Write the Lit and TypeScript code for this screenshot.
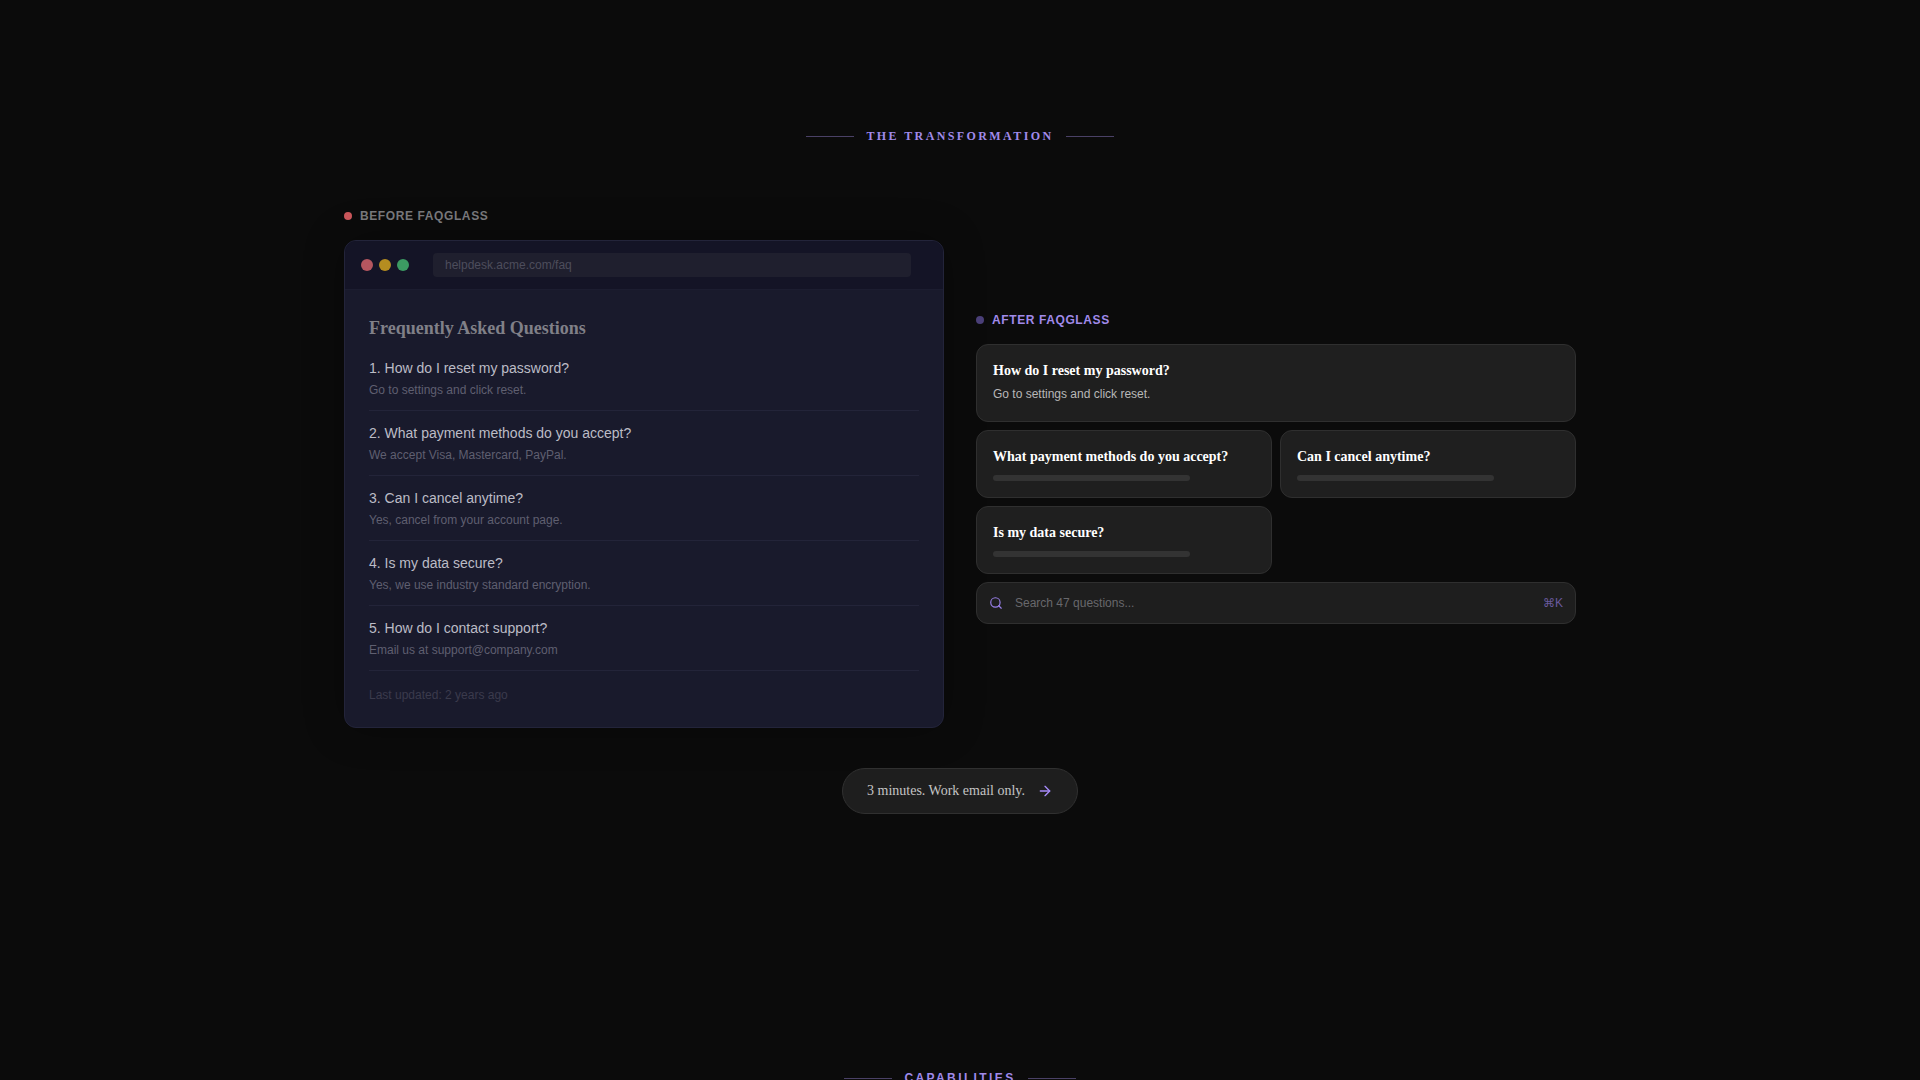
import { LitElement, html, css } from "lit";
import { customElement } from "lit/decorators.js";

const before = [
  ["1. How do I reset my password?", "Go to settings and click reset."],
  ["2. What payment methods do you accept?", "We accept Visa, Mastercard, PayPal."],
  ["3. Can I cancel anytime?", "Yes, cancel from your account page."],
  ["4. Is my data secure?", "Yes, we use industry standard encryption."],
  ["5. How do I contact support?", "Email us at support@company.com"],
];

@customElement("app-root")
export class AppRoot extends LitElement {
  static styles = css`
    :host {
      display: block;
      height: 100vh;
      overflow: hidden;
      background: #0b0b0b;
      font-family: "Liberation Sans", Arial, sans-serif;
    }
    * { box-sizing: border-box; }
    .section { padding-top: 128px; display: flex; flex-direction: column; align-items: center; }
    .section.next { padding-top: 256px; }
    .eyebrow {
      display: flex; align-items: center; justify-content: center; gap: 12px;
      height: 16px; color: #a08aea; font-size: 12px; font-weight: 700; letter-spacing: 0.2em; white-space: nowrap;
    }
    .eyebrow i { display: block; width: 48px; height: 1px; background: #4a4166; }
    .serif { font-family: "Liberation Serif", "Times New Roman", serif; }
    .compare {
      width: 1232px; margin-top: 64px;
      display: grid; grid-template-columns: 600px 600px; gap: 32px; align-items: center;
    }
    .label {
      display: flex; align-items: center; gap: 8px; height: 16px; margin-bottom: 16px;
      font-size: 12px; font-weight: 700; letter-spacing: 0.05em;
    }
    .label b { display: block; width: 8px; height: 8px; border-radius: 50%; }
    .label.bad { color: #77777a; }
    .label.bad b { background: #c9565a; }
    .label.good { color: #a08aea; }
    .label.good b { background: #4a3f78; }

    .browser {
      background: #191a2c; border: 1px solid #23243a; border-radius: 12px; overflow: hidden;
      box-shadow: 0 0 40px rgba(0, 0, 0, 0.3);
    }
    .chrome {
      display: flex; align-items: center; padding: 12px 16px; height: 49px;
      background: #141426; border-bottom: 1px solid #1c1d30;
    }
    .lights { display: flex; gap: 6px; margin-right: 24px; }
    .lights span { display: block; width: 12px; height: 12px; border-radius: 50%; }
    .r { background: #b5565f; }
    .y { background: #b58d20; }
    .g { background: #3c9a62; }
    .url {
      flex: 1; height: 24px; margin-right: 16px; padding: 0 12px; border-radius: 4px;
      background: #1f1f2e; color: #4d4d5c; font-size: 12px; line-height: 24px;
    }
    .page { padding: 24px; }
    .page h2 {
      margin: 0 0 15px; font: 700 18px/29px "Liberation Serif", "Times New Roman", serif; color: #808088;
    }
    .row { padding-bottom: 12px; border-bottom: 1px solid #232439; margin-bottom: 12px; }
    .row .q { font-size: 14px; line-height: 20px; margin-bottom: 4px; color: #bcbcc6; }
    .row .a { font-size: 12px; line-height: 16px; color: #5f5f70; }
    .updated { margin-top: 16px; font-size: 12px; line-height: 16px; color: #3b3b4c; }

    .cards { display: grid; grid-template-columns: 1fr 1fr; gap: 8px; }
    .card {
      background: #1f1f1f; border: 1px solid #2f2f2f; border-radius: 12px; padding: 16px;
    }
    .wide { grid-column: 1 / -1; }
    .card h3 {
      margin: 0; font: 700 14px/20px "Liberation Serif", "Times New Roman", serif; color: #fff;
    }
    .card p { margin: 4px 0 2px; font-size: 12px; line-height: 18px; color: #b8b8b8; }
    .bar { width: 75%; height: 6px; margin-top: 8px; border-radius: 3px; background: #333; }
    .search {
      grid-column: 1 / -1; display: flex; align-items: center; gap: 12px; height: 42px; padding: 0 12px;
      background: #1e1e1e; border: 1px solid #2f2f2f; border-radius: 12px;
      font-size: 12px; color: #68686c;
    }
    .search svg { width: 14px; height: 14px; flex: none; color: #9a80ea; }
    .search span { flex: 1; }
    .search kbd { font: 12px "Liberation Sans", "DejaVu Sans", sans-serif; color: #6a5a9e; }

    .cta {
      display: inline-flex; align-items: center; gap: 12px; height: 46px; margin-top: 40px; padding: 0 24px;
      background: #1e1e1e; border: 1px solid #303030; border-radius: 23px;
      font: 14px "Liberation Serif", "Times New Roman", serif; color: #c4c4c4;
    }
    .cta svg { width: 16px; height: 16px; color: #a78bfa; }
  `;

  render() {
    return html`
      <div class="section">
        <div class="eyebrow serif"><i></i><span>THE TRANSFORMATION</span><i></i></div>
        <div class="compare">
          <div>
            <div class="label bad"><b></b>BEFORE FAQGLASS</div>
            <div class="browser">
              <div class="chrome">
                <div class="lights"><span class="r"></span><span class="y"></span><span class="g"></span></div>
                <div class="url">helpdesk.acme.com/faq</div>
              </div>
              <div class="page">
                <h2>Frequently Asked Questions</h2>
                ${before.map(([q, a]) => html`<div class="row"><div class="q">${q}</div><div class="a">${a}</div></div>`)}
                <div class="updated">Last updated: 2 years ago</div>
              </div>
            </div>
          </div>
          <div>
            <div class="label good"><b></b>AFTER FAQGLASS</div>
            <div class="cards">
              <div class="card wide"><h3>How do I reset my password?</h3><p>Go to settings and click reset.</p></div>
              <div class="card"><h3>What payment methods do you accept?</h3><div class="bar"></div></div>
              <div class="card"><h3>Can I cancel anytime?</h3><div class="bar"></div></div>
              <div class="card"><h3>Is my data secure?</h3><div class="bar"></div></div>
              <div class="search">
                <svg viewBox="0 0 24 24" fill="none" stroke="currentColor" stroke-width="2" stroke-linecap="round" stroke-linejoin="round"><circle cx="11" cy="11" r="8"></circle><path d="m21 21-4.3-4.3"></path></svg>
                <span>Search 47 questions...</span>
                <kbd>⌘K</kbd>
              </div>
            </div>
          </div>
        </div>
        <div class="cta">
          3 minutes. Work email only.
          <svg viewBox="0 0 24 24" fill="none" stroke="currentColor" stroke-width="2" stroke-linecap="round" stroke-linejoin="round"><path d="M5 12h14"></path><path d="m12 5 7 7-7 7"></path></svg>
        </div>
      </div>
      <div class="section next">
        <div class="eyebrow"><i></i><span>CAPABILITIES</span><i></i></div>
      </div>
    `;
  }
}
